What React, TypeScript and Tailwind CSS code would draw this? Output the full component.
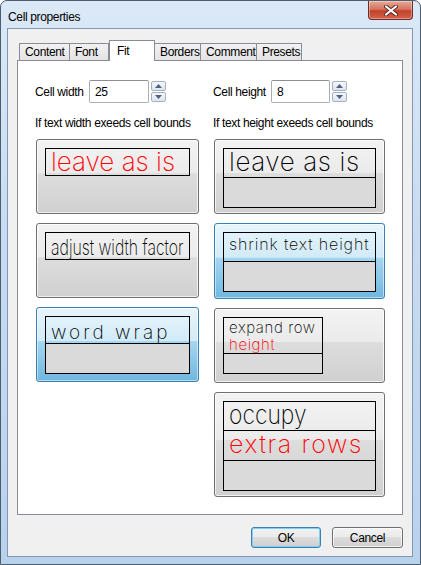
import React from "react";

const UI = '"Liberation Sans", Arial, sans-serif';
const CAD = '"Inter", "DejaVu Sans", sans-serif';

// 공용 셀 미리보기 행
const Row = ({
    h,
    gray,
    last,
    children,
}: {
    h: number;
    gray?: boolean;
    last?: boolean;
    children?: React.ReactNode;
}) => (
    <div
        className={`whitespace-nowrap pl-[5px] tracking-normal ${gray ? "bg-[#dadada]" : ""} ${last ? "" : "border-b border-black"}`}
        style={{height: h}}
    >
        {children}
    </div>
);

const Card = ({
    h,
    active,
    children,
}: {
    h: number;
    active?: boolean;
    children: React.ReactNode;
}) => (
    <div
        className={
            active
                ? "rounded-[3px] border border-[#3c7fb1] bg-[linear-gradient(to_bottom,#e8f5fc_0%,#d2ebf8_45%,#a6d6f0_46%,#6fb7df_100%)] p-[8px] shadow-[inset_0_0_0_1px_rgba(255,255,255,0.5)]"
                : "rounded-[3px] border border-[#707070] bg-[linear-gradient(to_bottom,#f3f3f3_0%,#ebebeb_45%,#dddddd_46%,#d0d0d0_100%)] p-[8px] shadow-[inset_0_0_0_1px_rgba(255,255,255,0.7)]"
        }
        style={{height: h}}
    >
        {children}
    </div>
);

const Spin = () => (
    <div className="flex flex-col gap-[1px]">
        {[0, 1].map((i) => (
            <div
                key={i}
                className="flex h-[10px] w-[15px] items-center justify-center rounded-[2px] border border-[#a4b1c2] bg-[linear-gradient(to_bottom,#f5f7fa,#dfe5ec)]"
            >
                <svg width="7" height="4" viewBox="0 0 7 4">
                    {i === 0 ? (
                        <path d="M0 4 L3.5 0 L7 4 Z" fill="#4d6185" />
                    ) : (
                        <path d="M0 0 L3.5 4 L7 0 Z" fill="#4d6185" />
                    )}
                </svg>
            </div>
        ))}
    </div>
);

const NumField = ({label, value, labelW, inputW}: {label: string; value: string; labelW: number; inputW: number}) => (
    <div className="flex items-center">
        <span className="whitespace-nowrap text-[12px] text-black" style={{width: labelW}}>
            {label}
        </span>
        <div
            className="flex h-[23px] items-center rounded-[2px] border border-[#abadb3] border-t-[#8d8f94] bg-white pl-[5px] text-[12px] text-black"
            style={{width: inputW}}
        >
            {value}
        </div>
        <div className="ml-[2px]">
            <Spin />
        </div>
    </div>
);

const tabs = [
    {label: "Content", w: 51},
    {label: "Font", w: 40},
    {label: "Fit", w: 46, active: true},
    {label: "Borders", w: 47},
    {label: "Comment", w: 57},
    {label: "Presets", w: 46},
];

export default function App() {
    return (
        <div
            className="flex h-[565px] w-[421px] flex-col rounded-t-[7px] border border-[#4c5d70] bg-[linear-gradient(to_bottom,#dbe9f7,#c7dcf2_40%,#b9d2ec)] tracking-[-0.35px]"
            style={{fontFamily: UI}}
        >
            {/* 타이틀 바 */}
            <div className="flex h-[27px] items-start justify-between">
                <span className="ml-[7px] mt-[7px] text-[12px] text-black">Cell properties</span>
                <div className="mr-[7px] flex h-[19px] w-[45px] items-center justify-center rounded-b-[4px] border border-t-0 border-[#6b2f25] bg-[linear-gradient(to_bottom,#e9a99a_0%,#d47560_45%,#c2432c_55%,#d4614a_100%)] shadow-[inset_0_0_0_1px_rgba(255,255,255,0.35)]">
                    <svg width="14" height="11" viewBox="0 0 14 11">
                        <path d="M2 1.5 L12 9.5 M12 1.5 L2 9.5" stroke="#5a2a22" strokeWidth="4" strokeLinecap="round" />
                        <path d="M2 1.5 L12 9.5 M12 1.5 L2 9.5" stroke="#ffffff" strokeWidth="2.2" strokeLinecap="round" />
                    </svg>
                </div>
            </div>

            {/* 클라이언트 영역 */}
            <div className="mb-[7px] ml-[6px] mr-[7px] flex flex-1 flex-col border border-[#8197b3] bg-[#f0f0f0]">
                <div className="ml-[9px] mt-[10px]">
                    {/* 탭 */}
                    <div className="relative z-10 flex h-[21px] items-end pl-[2px]">
                        {tabs.map((t) =>
                            t.active ? (
                                <div
                                    key={t.label}
                                    className="-mb-px h-[21px] border border-b-0 border-[#898c95] bg-white pl-[7px] pt-[1px] text-[12px] text-black"
                                    style={{width: t.w}}
                                >
                                    {t.label}
                                </div>
                            ) : (
                                <div
                                    key={t.label}
                                    className="-ml-px h-[17px] whitespace-nowrap border border-b-0 border-[#898c95] bg-[linear-gradient(to_bottom,#f2f2f2,#e3e3e3)] pl-[5px] text-[12px] leading-[16px] text-black first:ml-0"
                                    style={{width: t.w}}
                                >
                                    {t.label}
                                </div>
                            )
                        )}
                    </div>

                    {/* 패널 */}
                    <div className="flex h-[455px] w-[386px] gap-[13px] border border-[#898c95] bg-white pl-[17px] pt-[19px]">
                        {/* 왼쪽 */}
                        <div className="flex w-[165px] flex-col">
                            <NumField label="Cell width" value="25" labelW={54} inputW={60} />
                            <p className="mt-[12px] whitespace-nowrap text-[12px] leading-[16px] text-black">If text width exeeds cell bounds</p>
                            <div className="ml-[1px] mt-[8px] flex w-[163px] flex-col gap-[9px]">
                                <Card h={75}>
                                    <div className="border border-black">
                                        <Row h={26} last>
                                            <span className="block text-[26px] font-extralight leading-none text-[#ff0000]" style={{fontFamily: CAD}}>
                                                leave as is
                                            </span>
                                        </Row>
                                    </div>
                                </Card>
                                <Card h={75}>
                                    <div className="border border-black">
                                        <Row h={26} last>
                                            <span className="inline-block origin-left scale-x-[0.72] pt-[3px] text-[22px] font-extralight leading-none text-black" style={{fontFamily: CAD}}>
                                                adjust width factor
                                            </span>
                                        </Row>
                                    </div>
                                </Card>
                                <Card h={75} active>
                                    <div className="border border-black">
                                        <Row h={27}>
                                            <span className="block pt-[6px] text-[19px] font-extralight leading-none tracking-[3px] text-black" style={{fontFamily: CAD}}>
                                                word wrap
                                            </span>
                                        </Row>
                                        <Row h={29} gray last />
                                    </div>
                                </Card>
                            </div>
                        </div>

                        {/* 오른쪽 */}
                        <div className="flex w-[173px] flex-col">
                            <NumField label="Cell height" value="8" labelW={58} inputW={59} />
                            <p className="mt-[12px] whitespace-nowrap text-[12px] leading-[16px] text-black">If text height exeeds cell bounds</p>
                            <div className="ml-[1px] mt-[8px] flex w-[171px] flex-col gap-[9px]">
                                <Card h={75}>
                                    <div className="border border-black">
                                        <Row h={29}>
                                            <span className="block text-[26px] font-extralight leading-none tracking-[0.6px] text-black" style={{fontFamily: CAD}}>
                                                leave as is
                                            </span>
                                        </Row>
                                        <Row h={29} gray last />
                                    </div>
                                </Card>
                                <Card h={76} active>
                                    <div className="border border-black">
                                        <Row h={29}>
                                            <span className="block pt-[3px] text-[16px] font-extralight leading-none tracking-[0.9px] text-black" style={{fontFamily: CAD}}>
                                                shrink text height
                                            </span>
                                        </Row>
                                        <Row h={29} gray last />
                                    </div>
                                </Card>
                                <Card h={75}>
                                    <div className="w-[100px] border border-black">
                                        <Row h={36}>
                                            <div className="pt-[1px] text-[15px] font-extralight leading-[17px] tracking-[0.6px]" style={{fontFamily: CAD}}>
                                                <div className="text-black">expand row</div>
                                                <div className="text-[#ff0000]">height</div>
                                            </div>
                                        </Row>
                                        <Row h={19} gray last />
                                    </div>
                                </Card>
                                <Card h={105}>
                                    <div className="border border-black">
                                        <Row h={29}>
                                            <span className="inline-block origin-left scale-x-[0.88] text-[26px] font-extralight leading-none text-black" style={{fontFamily: CAD}}>
                                                occupy
                                            </span>
                                        </Row>
                                        <Row h={30}>
                                            <span className="block pt-[1px] text-[25px] font-extralight leading-none tracking-[1.6px] text-[#ff0000]" style={{fontFamily: CAD}}>
                                                extra rows
                                            </span>
                                        </Row>
                                        <Row h={29} gray last />
                                    </div>
                                </Card>
                            </div>
                        </div>
                    </div>
                </div>

                {/* 버튼 */}
                <div className="mr-[9px] mt-[12px] flex justify-end gap-[11px]">
                    <button className="h-[21px] w-[70px] rounded-[3px] border border-[#3c7fb1] bg-[linear-gradient(to_bottom,#f2f2f2_0%,#ebebeb_45%,#dddddd_46%,#cfcfcf_100%)] text-[12px] text-black shadow-[inset_0_0_0_1px_#7ed0f5]">
                        OK
                    </button>
                    <button className="h-[21px] w-[71px] rounded-[3px] border border-[#707070] bg-[linear-gradient(to_bottom,#f2f2f2_0%,#ebebeb_45%,#dddddd_46%,#cfcfcf_100%)] text-[12px] text-black shadow-[inset_0_0_0_1px_rgba(255,255,255,0.7)]">
                        Cancel
                    </button>
                </div>
            </div>
        </div>
    );
}
